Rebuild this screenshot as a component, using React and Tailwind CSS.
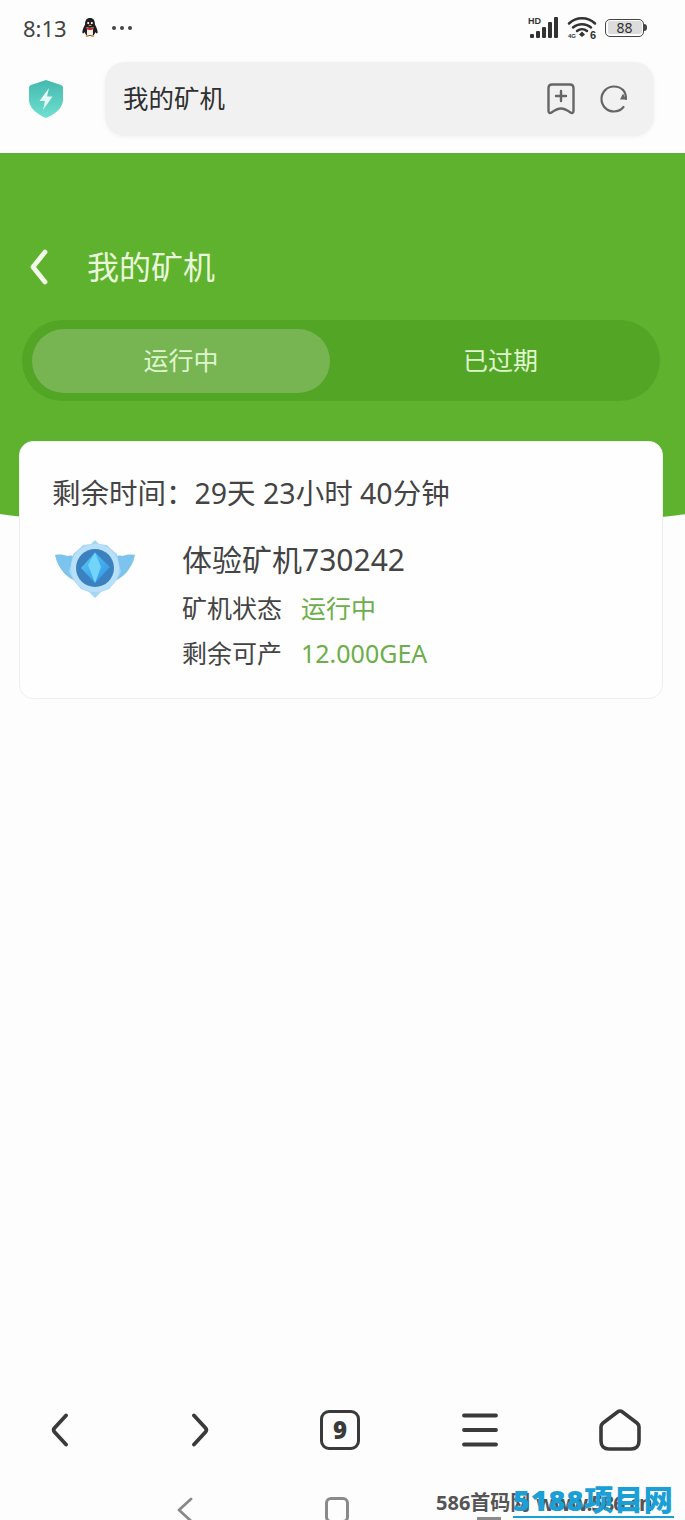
import { useId } from 'react'

const cjk = "font-['Noto_Sans','Noto_Sans_CJK_SC',sans-serif]"

function QQIcon() {
  return (
    <svg width="18" height="22" viewBox="0 0 20 24">
      <path d="M10 1C6 1 4.500 4 4.500 8C3 11 1.500 14 1.500 17C2 19 3.500 17.500 4 16.500C4.500 18 5 19 6 20L10 21L14 20C15 19 15.500 18 16 16.500C16.500 17.500 18 19 18.500 17C18.500 14 17 11 15.500 8C15.500 4 14 1 10 1Z" fill="#1d1d1f" />
      <path d="M6 10.500C7.500 15 6 18 7 20L13 20C14 18 12.500 15 14 10.500C12 12 8 12 6 10.500Z" fill="#f2efec" />
      <path d="M5.500 10.500C8 12.500 12 12.500 14.500 10.500L14 13C12 14.500 8 14.500 6 13Z" fill="#b9312e" />
      <path d="M5 20.500C6 19.500 8 20 9 21.500C7.500 22.500 5.500 22 5 20.500ZM15 20.500C14 19.500 12 20 11 21.500C12.500 22.500 14.500 22 15 20.500Z" fill="#e29a2c" />
      <circle cx="8" cy="6.500" r="1.200" fill="#fff" />
      <circle cx="12" cy="6.500" r="1.200" fill="#fff" />
      <path d="M8 9C9 8 11 8 12 9C11 10 9 10 8 9Z" fill="#e7a63a" />
    </svg>
  )
}

function SignalIcon() {
  return (
    <svg width="32" height="24" viewBox="0 0 32 24" className="text-[#333]">
      <text x="0" y="8" fontSize="9" fontWeight="700" fontFamily="Liberation Sans, sans-serif" fill="currentColor">HD</text>
      <g fill="currentColor">
        <rect x="2" y="18" width="4" height="4" rx="1" />
        <rect x="8" y="15" width="4" height="7" rx="1" />
        <rect x="14" y="11" width="4" height="11" rx="1" />
        <rect x="20" y="6" width="4" height="16" rx="1" />
        <rect x="26" y="1" width="4" height="21" rx="1" />
      </g>
    </svg>
  )
}

function WifiIcon() {
  return (
    <svg width="31" height="26" viewBox="0 0 31 26" className="text-[#333]">
      <g fill="none" stroke="currentColor" strokeWidth="2.500" strokeLinecap="round">
        <path d="M2 8.500C9 1.500 21 1.500 28 8.500" />
        <path d="M6 12.500C11 8 19 8 24 12.500" />
        <path d="M10 16C13 13.500 17 13.500 20 16" />
      </g>
      <path d="M15 16.500L18 19.500L15 22L12 19.500Z" fill="currentColor" />
      <text x="1" y="23" fontSize="6" fontWeight="700" fontFamily="Liberation Sans, sans-serif" fill="currentColor">4G</text>
      <text x="23" y="24" fontSize="11" fontWeight="700" fontFamily="Liberation Sans, sans-serif" fill="currentColor">6</text>
    </svg>
  )
}

function Battery() {
  return (
    <div className="flex items-center">
      <div className="w-[39px] h-[18px] rounded-[5px] border-[1.5px] border-[#444] p-[1.5px] flex">
        <div className="flex-1 rounded-[2px] bg-[#dcdcdc] flex items-center justify-center text-[14px] leading-none text-[#333]">88</div>
      </div>
      <div className="w-[3px] h-[7px] rounded-r-sm bg-[#444]" />
    </div>
  )
}

function ShieldIcon() {
  const id = useId()
  return (
    <svg width="36" height="40" viewBox="0 0 36 40">
      <defs>
        <linearGradient id={id} x1="0" y1="0" x2="0" y2="1">
          <stop offset="0" stopColor="#45b9ae" />
          <stop offset="1" stopColor="#6fe0d0" />
        </linearGradient>
      </defs>
      <path d="M18 1L33 6C34.500 6.500 35 7.500 35 9L35 21C35 29 26 36 18 39C10 36 1 29 1 21L1 9C1 7.500 1.500 6.500 3 6Z" fill={`url(#${id})`} />
      <path d="M21 9L11.500 22L17 22L15 31L24.500 17.500L19 17.500Z" fill="#e4faf6" />
    </svg>
  )
}

function BookmarkPlus() {
  return (
    <svg width="28" height="32" viewBox="0 0 28 32" fill="none" stroke="#666" strokeWidth="2.400" strokeLinejoin="round" strokeLinecap="round">
      <path d="M5 1.500L23 1.500C25 1.500 26.500 3 26.500 5L26.500 28C26.500 30 25 30.500 23.500 29.500C20 27 17 25.500 14 25.500C11 25.500 8 27 4.500 29.500C3 30.500 1.500 30 1.500 28L1.500 5C1.500 3 3 1.500 5 1.500Z" />
      <path d="M14 8L14 18M9 13L19 13" />
    </svg>
  )
}

function Reload() {
  return (
    <svg width="30" height="30" viewBox="0 0 30 30" fill="none" stroke="#666" strokeWidth="2.200" strokeLinecap="round">
      <path d="M24 6C21.500 3.500 18.500 2.500 15 2.500C8 2.500 2.500 8 2.500 15C2.500 22 8 27.500 15 27.500C19 27.500 22.500 25.500 24.500 23" />
      <path d="M21 15.500L27 15.500L24 9.500Z" fill="#666" stroke="none" />
      <path d="M24 6C26 8 27 11 27 15" />
    </svg>
  )
}

function Medal() {
  const id = useId()
  return (
    <svg width="80" height="60" viewBox="0 0 80 60">
      <defs>
        <linearGradient id={id} x1="0" y1="0" x2="1" y2="1">
          <stop offset="0" stopColor="#58c8f5" />
          <stop offset="1" stopColor="#2f93e4" />
        </linearGradient>
      </defs>
      {/* wings */}
      <path d="M0 15C5 14 9 15 13 16C16 15 19 16 22 18L24 42C14 40 3 30 0 15Z" fill="#7cc3ee" />
      <path d="M80 15C75 14 71 15 67 16C64 15 61 16 58 18L56 42C66 40 77 30 80 15Z" fill="#7cc3ee" />
      {/* cog ring */}
      <path d="M40 0L44 4L52 5L56 9L62 14L64 24L66 32L61 41L54 49L46 52L40 58L34 52L26 49L19 41L14 32L16 24L18 14L24 9L28 5L36 4Z" fill="#a5d6f6" />
      <circle cx="40" cy="28" r="24" fill="#b9e0f9" />
      <circle cx="40" cy="28" r="19" fill="#3b80bf" />
      <path d="M40 12.500L55 27L40 43L26 28Z" fill={`url(#${id})`} />
      <path d="M40 12.500L46 27L40 43L33 25Z" fill="#72d4f8" />
    </svg>
  )
}

function Chevron({ flip }) {
  return (
    <svg width="18" height="34" viewBox="0 0 18 34" fill="none" stroke="#3a3a3a" strokeWidth="3.800" strokeLinecap="round" strokeLinejoin="round" className={flip ? 'rotate-180' : ''}>
      <path d="M15 2.500L3.500 15C2.500 16.200 2.500 17.800 3.500 19L15 31.500" />
    </svg>
  )
}

function MenuIcon() {
  return (
    <svg width="36" height="36" viewBox="0 0 36 36" stroke="#3a3a3a" strokeWidth="3.800" strokeLinecap="round">
      <path d="M2 3.500L34 3.500M2 18L34 18M2 32.500L34 32.500" />
    </svg>
  )
}

function HomeIcon() {
  return (
    <svg width="42" height="42" viewBox="0 0 42 42" fill="none" stroke="#3a3a3a" strokeWidth="3.600" strokeLinejoin="round">
      <path d="M18.500 3L4 14C2.700 15 2 16.300 2 18L2 32C2 37 5 40 10 40L32 40C37 40 40 37 40 32L40 18C40 16.300 39.300 15 38 14L23.500 3C22 1.800 20 1.800 18.500 3Z" />
    </svg>
  )
}

function Row({ label, value }) {
  return (
    <div className="flex items-center h-[45px] text-[25px] leading-none">
      <span className="w-[119px] text-[#444]">{label}</span>
      <span className="text-[#6cae49]">{value}</span>
    </div>
  )
}

export default function App() {
  return (
    <div className={`relative h-[1520px] flex flex-col overflow-hidden bg-[#fdfdfd] ${cjk}`}>
      {/* status bar */}
      <div className="h-[55px] shrink-0 flex items-center pl-[23px] pr-[38px]">
        <span className="text-[22px] leading-none text-[#444]">8:13</span>
        <span className="ml-[14px] flex"><QQIcon /></span>
        <span className="ml-[13px] flex gap-[4px]">
          <i className="w-[4px] h-[4px] rounded-full bg-[#444]" />
          <i className="w-[4px] h-[4px] rounded-full bg-[#444]" />
          <i className="w-[4px] h-[4px] rounded-full bg-[#444]" />
        </span>
        <div className="ml-auto flex items-center gap-[7px]">
          <SignalIcon />
          <WifiIcon />
          <Battery />
        </div>
      </div>

      {/* address bar */}
      <div className="h-[98px] shrink-0 flex items-start pt-[7px] pl-[28px] pr-[31px] shadow-[0_2px_4px_rgba(0,0,0,0.06)]">
        <div className="w-[36px] mt-[17px] flex"><ShieldIcon /></div>
        <div className="ml-[41px] flex-1 h-[74px] rounded-[20px] bg-[#f1f1f1] shadow-[0_1px_4px_rgba(0,0,0,0.05)] flex items-center pl-[18px] pr-[25px]">
          <span className="text-[25.500px] leading-none text-[#2f2f2f]">我的矿机</span>
          <span className="ml-auto flex"><BookmarkPlus /></span>
          <span className="ml-[24px] flex"><Reload /></span>
        </div>
      </div>

      {/* green header */}
      <div className="relative h-[337px] shrink-0 bg-[#5fb22d]">
        <div className="absolute top-[297px] left-1/2 -translate-x-1/2 w-[860px] h-[80px] rounded-[50%] bg-[#5fb22d]" />
        <div className="relative pt-[80px] px-[22px]">
          <div className="h-[68px] flex items-center pl-[7px]">
            <svg width="20" height="36" viewBox="0 0 20 36" fill="none" stroke="#f2fbe9" strokeWidth="4.800" strokeLinecap="round" strokeLinejoin="round">
              <path d="M16 3L4 18L16 33" />
            </svg>
            <h1 className="ml-[38px] text-[32px] leading-none font-normal text-[#e9f8dc]">我的矿机</h1>
          </div>
          <div className="mt-[19px] mr-[3px] h-[81px] rounded-full bg-[#53a526] flex items-center pl-[10px] text-[25px] leading-none text-[#dff5cd]">
            <div className="w-[298px] h-[64px] rounded-full bg-[#77b452] flex items-center justify-center">运行中</div>
            <div className="flex-1 flex items-center justify-center pl-[11px]">已过期</div>
          </div>
        </div>
      </div>

      {/* card */}
      <div className="relative mt-[-49px] mx-[19px] mr-[22px] h-[258px] shrink-0 rounded-[14px] bg-[#fefefe] border border-[#eeeeee] pl-[32px]">
        <p className="mt-[30px] h-[42px] flex items-center text-[28.500px] leading-none text-[#444] whitespace-nowrap">
          <span>剩余时间：</span>
          <span>29天 23小时 40分钟</span>
        </p>
        <div className="mt-[20px] flex items-start">
          <div className="w-[130px] pl-[3px] pt-[6px] flex"><Medal /></div>
          <div>
            <div className="h-[52px] flex items-center text-[30px] leading-none text-[#444]">体验矿机730242</div>
            <Row label="矿机状态" value="运行中" />
            <Row label="剩余可产" value="12.000GEA" />
          </div>
        </div>
      </div>

      {/* browser toolbar */}
      <div className="mt-auto h-[60px] shrink-0 grid grid-cols-[repeat(5,140px)] ml-[-10px] items-center justify-items-center">
        <Chevron />
        <Chevron flip />
        <div className="w-[40px] h-[40px] rounded-[9px] border-[3.500px] border-[#3a3a3a] flex items-center justify-center text-[24px] leading-none font-black text-[#3a3a3a]">9</div>
        <MenuIcon />
        <HomeIcon />
      </div>

      {/* system nav, cut off by the bottom edge */}
      <div className="h-[60px] shrink-0 grid grid-cols-[repeat(3,152px)] pl-[109px] pt-[37px] justify-items-center items-start">
        <svg width="16" height="26" viewBox="0 0 16 26" fill="none" stroke="#8a8a8a" strokeWidth="2.800" strokeLinecap="round" strokeLinejoin="round">
          <path d="M14 2L2 13L14 24" />
        </svg>
        <div className="w-[24px] h-[26px] rounded-[6px] border-[3px] border-[#8a8a8a]" />
        <div className="w-[24px] h-[3px] mt-[20px] bg-[#8a8a8a]" />
      </div>

      {/* watermark */}
      <div className="absolute left-[436px] top-[1491px] flex items-center text-[20px] leading-[24px] font-bold text-[#555] whitespace-nowrap">
        586首码网<span className="ml-[6px] text-[21px] tracking-[-1px]">www.586.cn</span>
      </div>
      <div className="absolute left-[513px] top-[1484px] text-[29px] leading-[32px] font-black tracking-[0.8px] text-[#1a9fd6] whitespace-nowrap border-b-2 border-[#1a9fd6]">5188项目网</div>
    </div>
  )
}
